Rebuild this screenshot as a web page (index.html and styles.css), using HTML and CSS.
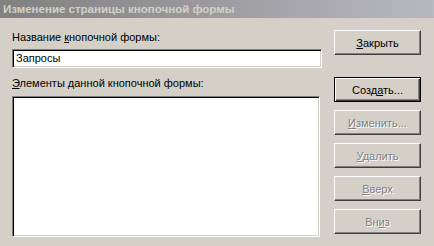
FILE: index.html
```html
<!DOCTYPE html>
<html lang="ru">
  <head>
    <meta charset="UTF-8" />
    <title>Изменение страницы кнопочной формы</title>
    <link rel="stylesheet" href="styles.css">
  </head>
  <body>
    <div class="window">
      <div class="caption">Изменение страницы кнопочной формы</div>
      <div class="content">
        <div class="main">
          <div class="label">Название <u>к</u>нопочной формы:</div>
          <div class="field">Запросы</div>
          <div class="label second"><u>Э</u>лементы данной кнопочной формы:</div>
          <div class="list"></div>
        </div>
        <div class="actions">
          <button class="btn"><u>З</u>акрыть</button>
          <button class="btn default first">Созд<u>а</u>ть...</button>
          <button class="btn" disabled><u>И</u>зменить...</button>
          <button class="btn" disabled><u>У</u>далить</button>
          <button class="btn" disabled><u>В</u>верх</button>
          <button class="btn" disabled>Вн<u>и</u>з</button>
        </div>
      </div>
    </div>
  </body>
</html>
```

FILE: styles.css
```css
body {
  margin: 0;
  background-color: #d4d0c8;
  font-family: "Liberation Sans", Arial, sans-serif;
  font-size: 11px;
  color: #000;
}
.window {
  width: 434px;
  height: 246px;
  background: #d4d0c8;
}
.caption {
  height: 18px;
  line-height: 18px;
  padding-left: 3px;
  font-size: 11.5px;
  font-weight: bold;
  color: #d4d0c8;
  background: linear-gradient(to right, #808080, #b8b8c0);
}
.content {
  display: flex;
  padding: 12px 0 0 12px;
}
.main {
  width: 310px;
  display: flex;
  flex-direction: column;
}
.label {
  height: 13px;
  line-height: 13px;
  margin-top: 1px;
}
.label.second {
  margin-top: 9px;
}
.field {
  margin-top: 5px;
  height: 13px;
  line-height: 13px;
  padding: 2px 3px;
  background: #fff;
  border: 1px solid;
  border-color: #808080 #fff #fff #808080;
  box-shadow: inset 1px 1px #000, inset -1px -1px #d4d0c8;
}
.list {
  margin-top: 6px;
  width: 306px;
  height: 139px;
  background: #fff;
  border: 1px solid;
  border-color: #808080 #fff #fff #808080;
  box-shadow: inset 1px 1px #000, inset -1px -1px #d4d0c8;
}
.actions {
  display: flex;
  flex-direction: column;
  gap: 8px;
  margin-left: 12px;
}
.btn {
  width: 87px;
  height: 25px;
  padding: 0;
  font-family: "Liberation Sans", Arial, sans-serif;
  font-size: 11px;
  color: #000;
  background: #d4d0c8;
  border: 1px solid;
  border-color: #fff #404040 #404040 #fff;
  box-shadow: inset -1px -1px #808080;
}
.btn.first {
  margin-top: 14px;
}
.btn.default {
  border: 1px solid #000;
  box-shadow: inset 1px 1px #fff, inset -1px -1px #404040, inset -2px -2px #808080;
}
.btn:disabled {
  color: #808080;
  text-shadow: 1px 1px #fff;
}
```
